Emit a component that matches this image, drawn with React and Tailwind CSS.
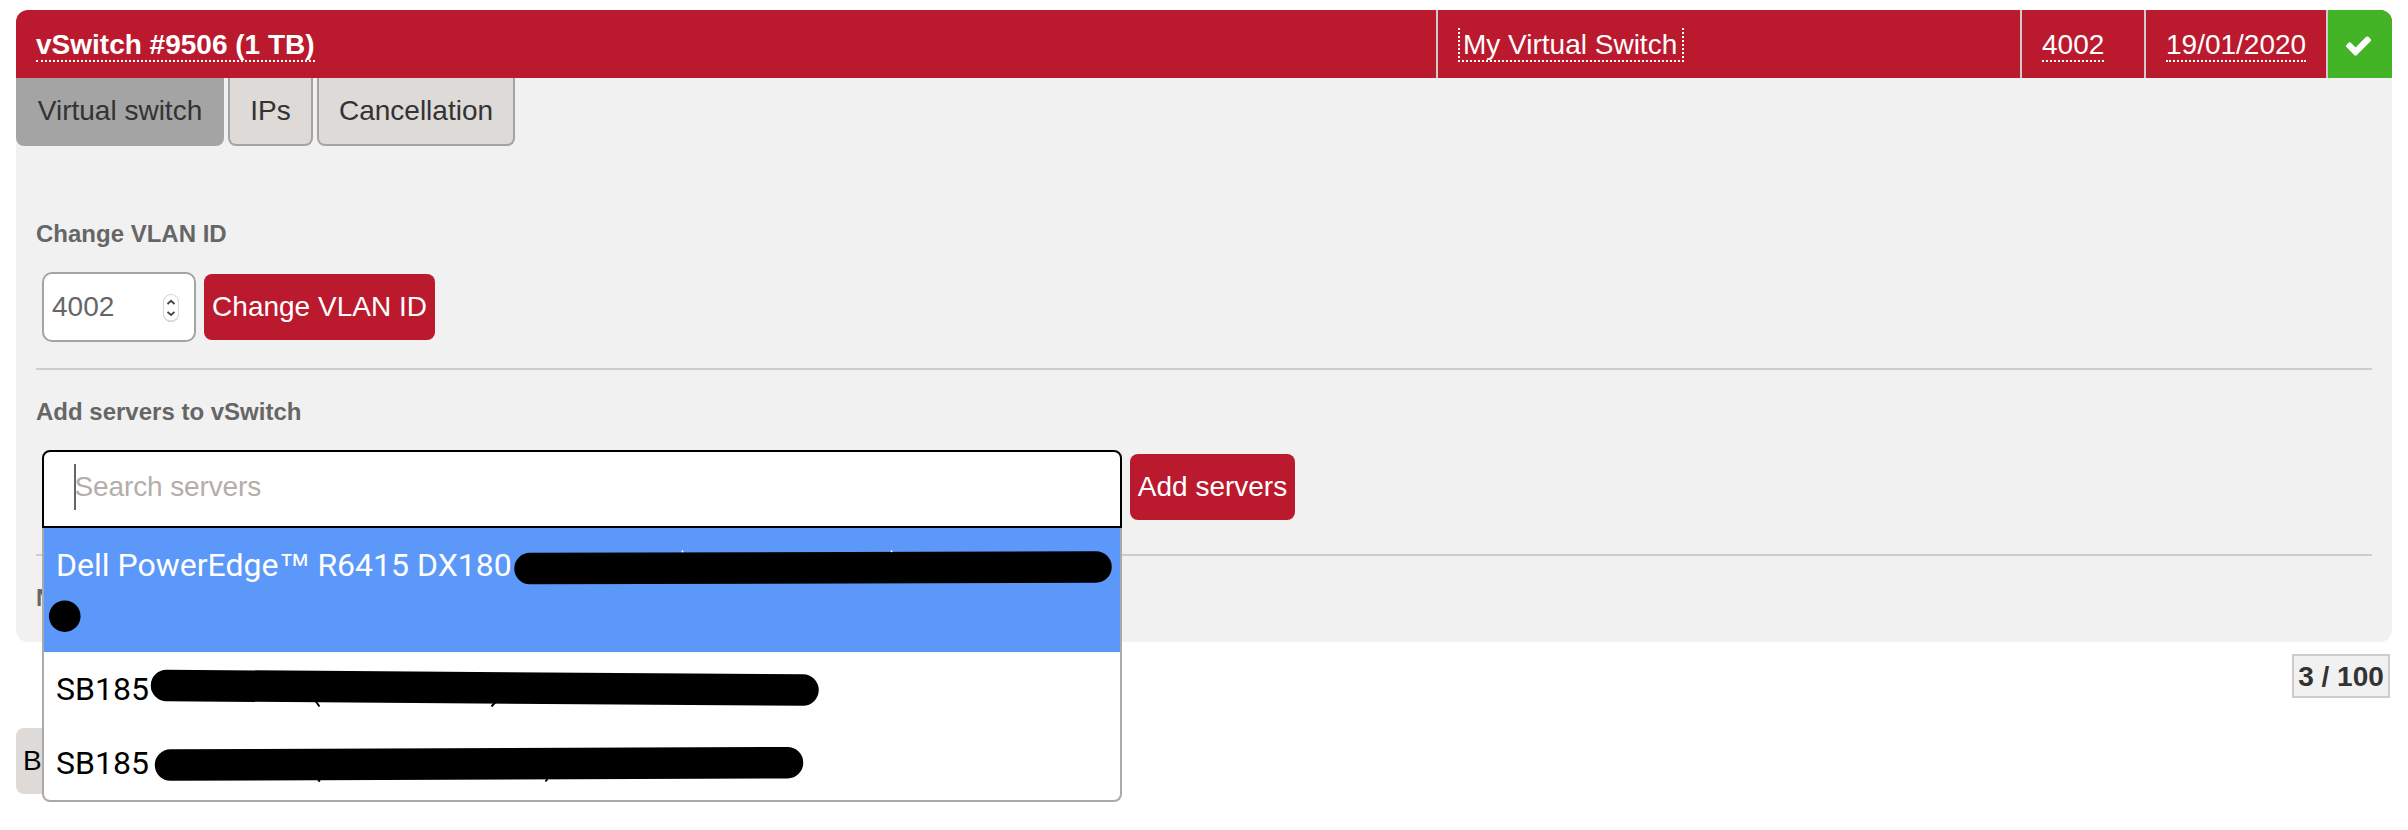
const font = "font-['Liberation_Sans',Arial,sans-serif]";

function Header() {
  return (
    <div className="flex h-[68px] overflow-hidden rounded-t-xl bg-[#bb192e] text-white">
      <div className="flex flex-1 items-start pt-[18px] pl-5">
        <span className="h-[34px] border-b-2 border-dotted border-white font-bold leading-[34px]">vSwitch #9506 (1 TB)</span>
      </div>
      <div className="flex w-[584px] items-start border-l-2 border-[#ccc] pt-[18px] pl-5">
        <span className="h-[34px] w-[226px] border-x-2 border-b-2 border-dotted border-white pl-[3px] leading-[34px] whitespace-nowrap">My Virtual Switch</span>
      </div>
      <div className="flex w-[124px] items-start border-l-2 border-[#ccc] pt-[18px] pl-5">
        <span className="h-[34px] border-b-2 border-dotted border-white leading-[34px]">4002</span>
      </div>
      <div className="flex w-[182px] items-start border-l-2 border-[#ccc] pt-[18px] pl-5">
        <span className="h-[34px] border-b-2 border-dotted border-white leading-[34px]">19/01/2020</span>
      </div>
      <div className="flex w-[66px] items-center border-l-2 border-[#ccc] bg-[#44b427] pt-[3px] pl-4">
        <svg viewBox="0 0 1792 1792" className="h-[29px] w-[29px]" fill="currentColor">
          <path d="M1671 566q0 40-28 68l-724 724-136 136q-28 28-68 28t-68-28l-136-136-362-362q-28-28-28-68t28-68l136-136q28-28 68-28t68 28l294 295 656-657q28-28 68-28t68 28l136 136q28 28 28 68z" />
        </svg>
      </div>
    </div>
  );
}

function Tabs() {
  const base = "h-[68px] rounded-b-lg border-x-2 border-b-2 border-[#a4a4a4] pt-[17px] text-center leading-8 text-[#333]";
  return (
    <div className="flex gap-1">
      <div className={`${base} w-[208px] bg-[#a4a4a4]`}>Virtual switch</div>
      <div className={`${base} w-[85px] bg-[#dedad7]`}>IPs</div>
      <div className={`${base} w-[198px] bg-[#dedad7]`}>Cancellation</div>
    </div>
  );
}

function Heading({ children }) {
  return <h3 className="text-2xl font-bold leading-8 text-[#666]">{children}</h3>;
}

function Redactions() {
  return (
    <svg className="absolute top-0 left-0 h-[274px] w-[1076px]" viewBox="44 528 1076 274" fill="none" stroke="#000">
      <g strokeWidth="31.5" strokeLinecap="round">
        <path d="M530 568.5L1096 567" />
        <path d="M64.7 616.2h0.1" />
        <path d="M166.500 685.500L803 690" />
        <path d="M170.500 765L787.500 762.700" />
      </g>
      <path d="M315.500 701l4 5.500M495.500 702l-4 4.500M318 780l2 1.500M547.500 779l-2 2.500" strokeWidth="2" />
      <path d="M682 552l1-1.500M891 550.500l1 1.500" stroke="#fff" strokeWidth="1.500" />
    </svg>
  );
}

function Dropdown() {
  return (
    <div className="absolute top-[78px] left-0 z-10 h-[274px] w-[1080px] rounded-b-lg border-x-2 border-b-2 border-[#aaa] bg-white font-[Roboto,sans-serif] text-[32px] text-black">
      <div className="h-[124px] bg-[#5b98f9] pt-3 pl-3 leading-[50px] text-white">
        Dell PowerEdge<span className="font-['Liberation_Sans',Arial,sans-serif] tracking-[-1px]">™</span> R6415 DX180
      </div>
      <div className="h-[74px] pt-3 pl-3 leading-[50px]">SB185</div>
      <div className="h-[74px] pt-3 pl-3 leading-[50px]">SB185</div>
      <Redactions />
    </div>
  );
}

export default function App() {
  return (
    <div className={`h-[830px] w-[2408px] overflow-hidden bg-white px-4 pt-[10px] text-[28px] ${font}`}>
      <Header />
      <div className="h-[564px] rounded-b-xl bg-[#f1f1f1]">
        <Tabs />
        <div className="px-5 pt-[72px]">
          <section className="h-[152px] border-b-2 border-[#ccc]">
            <Heading>Change VLAN ID</Heading>
            <div className="mt-[22px] ml-[6px] flex items-center gap-2">
              <div className="flex h-[70px] w-[154px] items-center justify-between rounded-[10px] border-2 border-[#a4a4a4] bg-white pr-[13px] pl-2 text-[#666]">
                <span className="leading-8">4002</span>
                <svg viewBox="0 0 20 32" className="h-8 w-5" fill="none">
                  <rect x="2.200" y="4" width="15.600" height="27" rx="7.800" fill="#ccc" />
                  <rect x="2.500" y="3.500" width="15" height="26.500" rx="7.500" fill="#fff" stroke="#d6d6d6" />
                  <path d="M6.500 13L10 9.800l3.500 3.200M6.500 20.800l3.500 3.200 3.500-3.200" stroke="#444" strokeWidth="1.800" />
                </svg>
              </div>
              <button className="h-[66px] w-[231px] rounded-lg bg-[#bb192e] pb-[1px] text-white whitespace-nowrap">Change VLAN ID</button>
            </div>
          </section>
          <section className="h-[186px] border-b-2 border-[#ccc] pt-[26px]">
            <Heading>Add servers to vSwitch</Heading>
            <div className="relative mt-[22px] ml-[6px] flex gap-2">
              <div className="flex h-[78px] w-[1080px] rounded-t-lg border-2 border-black bg-white pt-3 pl-[30px]">
                <div className="h-[46px] w-[2px] bg-[#666]" />
                <div className="-ml-[1.5px] leading-[45px] tracking-[-0.12px] text-[#b3aeaa]">Search servers</div>
              </div>
              <button className="mt-1 h-[66px] w-[165px] rounded-lg bg-[#bb192e] pb-[1px] text-white whitespace-nowrap">Add servers</button>
              <Dropdown />
            </div>
          </section>
          <div className="pt-[26px]">
            <Heading>N</Heading>
          </div>
        </div>
      </div>
      <div className="mt-3 mr-[2px] ml-auto h-11 w-[98px] border-2 border-[#ccc] bg-[#f1f1f1] text-center font-bold leading-[42px] text-[#333] whitespace-nowrap">3 / 100</div>
      <div className="mt-[30px] h-[66px] w-20 rounded-lg bg-[#dedad7] pl-[7px] leading-[66px] text-black">B</div>
    </div>
  );
}
